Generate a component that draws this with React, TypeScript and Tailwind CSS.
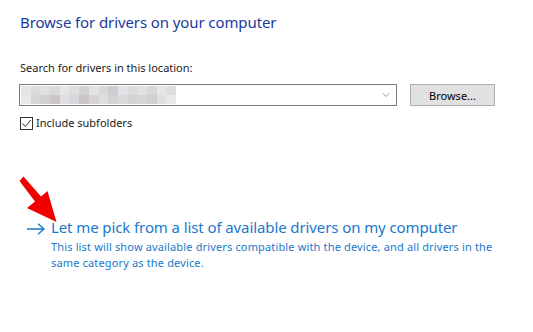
import { ChevronDown } from "lucide-react";

const topRow = ["#e4e4e6", "#dcdcdf", "#e0e0e2", "#d9d9dc", "#e6e6e8", "#dedee0", "#d2d0d3", "#e2e2e4", "#d8d7da", "#cfcdd1", "#e3e3e5", "#dadadd", "#e1e1e3", "#d7d6d9", "#e5e5e7", "#dddde0"];
const bottomRow = ["#e7e7e9", "#d6d6d9", "#d1cfd2", "#cdc6c6", "#dfe0e3", "#d8d8db", "#cbc5c5", "#d4d3d6", "#dedde0", "#d3d3d6", "#d9d9dc", "#d2d2d5", "#d5d5d8", "#d0d0d3", "#e0e0e2", "#e8e8ea"];

export default function App() {
  return (
    <div className="relative w-[533px] h-[332px] bg-white overflow-hidden font-['Noto_Sans',sans-serif]">
      <div className="pl-[20px] pt-[11px]">
        <h1 className="text-[15px] text-[#1c3a9e] leading-[22px] tracking-[-0.1px]">
          Browse for drivers on your computer
        </h1>

        <div className="mt-[27px] text-[11px] text-[#1a1a1a] leading-[16px]">
          Search for drivers in this location:
        </div>

        <div className="mt-[8px] flex items-center">
          <div className="w-[378px] h-[22px] border border-[#7a7a7a] bg-white flex items-center justify-between pr-[4px] ml-[-1px]">
            <div className="flex flex-col blur-[0.6px] ml-[1px]">
              <div className="flex">
                {topRow.map((c, i) => (
                  <div key={i} className="w-[9.7px] h-[9px]" style={{ background: c }} />
                ))}
              </div>
              <div className="flex">
                {bottomRow.map((c, i) => (
                  <div key={i} className="w-[9.7px] h-[9px]" style={{ background: c }} />
                ))}
              </div>
            </div>
            <ChevronDown size={12} strokeWidth={1.2} className="text-[#555]" />
          </div>
          <button className="ml-[13px] w-[85px] h-[22px] bg-[#e1e1e1] border border-[#adadad] text-[11px] text-black leading-none">
            Browse...
          </button>
        </div>

        <label className="mt-[9px] flex items-center gap-[3px]">
          <span className="w-[13px] h-[13px] border border-[#333] flex items-center justify-center">
            <svg width="11" height="11" viewBox="0 0 11 11">
              <path d="M1.5 5.5 L4.3 8.5 L9.8 2" fill="none" stroke="#333" strokeWidth="1" />
            </svg>
          </span>
          <span className="text-[11px] text-[#1a1a1a] leading-[16px]">Include subfolders</span>
        </label>

        <div className="mt-[86px] flex items-start">
          <svg width="20" height="12" viewBox="0 0 20 12" className="mt-[6px] ml-[6px]">
            <path d="M1 6 H18 M12 0.8 L18 6 L12 11.2" fill="none" stroke="#1979ca" strokeWidth="1.4" />
          </svg>
          <div className="ml-[5px]">
            <div className="text-[15px] text-[#1979ca] leading-[21px] tracking-[-0.1px]">
              Let me pick from a list of available drivers on my computer
            </div>
            <div className="mt-[1px] text-[11px] text-[#1979ca] leading-[16px] tracking-[0.15px] w-[450px]">
              This list will show available drivers compatible with the device, and all drivers in the same category as the device.
            </div>
          </div>
        </div>
      </div>

      <svg className="absolute left-0 top-0" width="80" height="240" viewBox="0 0 80 240">
        <path
          d="M19.5 181 L23.5 176.5 L41 196.5 L47.5 191 L56.5 222 L27 208 L35 201.5 Z"
          fill="#f20000"
        />
      </svg>
    </div>
  );
}
